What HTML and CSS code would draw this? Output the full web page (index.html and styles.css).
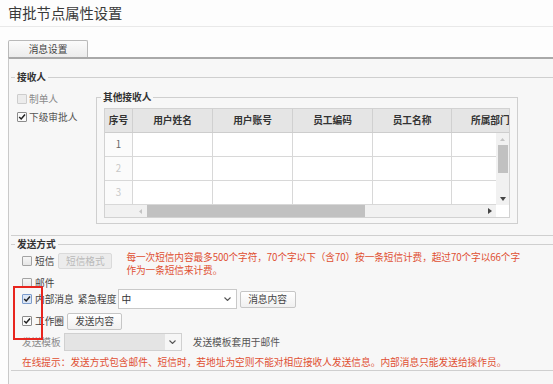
FILE: index.html
```html
<!DOCTYPE html>
<html lang="zh-CN">
<head>
    <meta charset="UTF-8">
    <title>审批节点属性设置</title>
    <link rel="stylesheet" href="styles.css">
</head>
<body>
    <div class="page-title">审批节点属性设置</div>

    <div class="tabs">
        <div class="tab">消息设置</div>
    </div>

    <div class="panel">
        <!-- 接收人 -->
        <div class="group group-recv">
            <div class="group-title">接收人</div>
            <div class="recv-body">
                <div class="recv-left">
                    <label class="check-row muted"><span class="cb dis"></span>制单人</label>
                    <label class="check-row"><span class="cb on"><svg viewBox="0 0 8 8"><path d="M1.2 4 3.2 6 7 1.4"/></svg></span>下级审批人</label>
                </div>

                <div class="box">
                    <div class="group-title box-title">其他接收人</div>
                    <div class="grid">
                        <div class="grid-head">
                            <div class="cell w-no">序号</div>
                            <div class="cell w-80">用户姓名</div>
                            <div class="cell w-80">用户账号</div>
                            <div class="cell w-80">员工编码</div>
                            <div class="cell w-79">员工名称</div>
                            <div class="cell w-last">所属部门</div>
                        </div>
                        <div class="grid-body">
                            <div class="grid-rows">
                                <div class="grid-row">
                                    <div class="cell w-no num">1</div>
                                    <div class="cell w-80"></div>
                                    <div class="cell w-80"></div>
                                    <div class="cell w-80"></div>
                                    <div class="cell w-79"></div>
                                    <div class="cell w-80"></div>
                                </div>
                                <div class="grid-row">
                                    <div class="cell w-no num light">2</div>
                                    <div class="cell w-80"></div>
                                    <div class="cell w-80"></div>
                                    <div class="cell w-80"></div>
                                    <div class="cell w-79"></div>
                                    <div class="cell w-80"></div>
                                </div>
                                <div class="grid-row">
                                    <div class="cell w-no num light">3</div>
                                    <div class="cell w-80"></div>
                                    <div class="cell w-80"></div>
                                    <div class="cell w-80"></div>
                                    <div class="cell w-79"></div>
                                    <div class="cell w-80"></div>
                                </div>
                            </div>
                            <div class="vscroll">
                                <div class="vs-btn"><svg width="5" height="3" viewBox="0 0 5 3"><polygon points="0,3 2.5,0 5,3" fill="#c4c4c4"/></svg></div>
                                <div class="vs-thumb"></div>
                                <div class="vs-track"></div>
                                <div class="vs-btn"><svg width="6" height="4" viewBox="0 0 6 4"><polygon points="0,0 6,0 3,4" fill="#444"/></svg></div>
                            </div>
                        </div>
                        <div class="hscroll">
                            <div class="hs-fix"></div>
                            <div class="hs-btn hs-left"><svg width="3" height="5" viewBox="0 0 3 5"><polygon points="3,0 0,2.5 3,5" fill="#c4c4c4"/></svg></div>
                            <div class="hs-thumb"></div>
                            <div class="hs-track"></div>
                            <div class="hs-btn"><svg width="4" height="6" viewBox="0 0 4 6"><polygon points="0,0 4,3 0,6" fill="#444"/></svg></div>
                            <div class="hs-corner"></div>
                        </div>
                    </div>
                </div>
            </div>
        </div>

        <!-- 发送方式 -->
        <div class="group group-send">
            <div class="group-title send-title">发送方式</div>

            <div class="send-row row-sms">
                <div class="opt">
                    <span class="cb"></span>
                    <span class="opt-label">短信</span>
                    <button class="btn btn-dis w-54">短信格式</button>
                </div>
                <div class="tip tip-sms">每一次短信内容最多500个字符，70个字以下（含70）按一条短信计费，超过70个字以66个字<br>作为一条短信来计费。</div>
            </div>

            <div class="send-row row-mail">
                <span class="cb"></span>
                <span class="opt-label">邮件</span>
            </div>

            <div class="send-row row-msg">
                <span class="cb on focus"><svg viewBox="0 0 8 8"><path d="M1.2 4 3.2 6 7 1.4"/></svg></span>
                <span class="opt-label">内部消息</span>
                <span class="field-label">紧急程度</span>
                <div class="select sel-level"><span>中</span><svg width="7" height="4" viewBox="0 0 7 4"><polyline points="0.5,0.5 3.5,3.5 6.5,0.5"/></svg></div>
                <button class="btn w-56">消息内容</button>
            </div>

            <div class="send-row row-circle">
                <span class="cb on"><svg viewBox="0 0 8 8"><path d="M1.2 4 3.2 6 7 1.4"/></svg></span>
                <span class="opt-label">工作圈</span>
                <button class="btn w-55">发送内容</button>
            </div>

            <div class="send-row row-tpl">
                <span class="tpl-label">发送模板</span>
                <div class="select dis sel-tpl"><span></span><svg width="7" height="4" viewBox="0 0 7 4"><polyline points="0.5,0.5 3.5,3.5 6.5,0.5"/></svg></div>
                <span class="tpl-note">发送模板套用于邮件</span>
            </div>

            <div class="send-row row-tip">
                <span class="tip">在线提示：发送方式包含邮件、短信时，若地址为空则不能对相应接收人发送信息。内部消息只能发送给操作员。</span>
            </div>
        </div>
    </div>

    <div class="mark"></div>
</body>
</html>
```

FILE: styles.css
```css
body {
    margin: 0;
    font-family: "Noto Sans CJK SC", "Microsoft YaHei", sans-serif;
    font-size: 9.7px;
    color: #333;
    background-color: #fdfdfd;
}

.page-title {
    height: 26px;
    line-height: 26px;
    padding-left: 8px;
    font-size: 14.3px;
    color: #3a3a3a;
    border-bottom: 1px solid #e9e9e9;
}

.tabs {
    padding: 13px 0 0 8px;
}

.tab {
    width: 80px;
    height: 17px;
    box-sizing: border-box;
    border: 1px solid #b9b9b9;
    border-bottom: 0;
    border-radius: 2px 2px 0 0;
    background: linear-gradient(#fbfbfb, #ececec);
    text-align: center;
    line-height: 16px;
    color: #444;
}

.panel {
    margin-left: 8px;
    height: 325px;
    border-top: 2px solid #a9a9a9;
    border-left: 1px solid #c9c9c9;
    background-color: #f7f7f7;
}

/* groups (fieldset look) */
.group {
    margin-left: 2px;
    border-top: 1px solid #cfcfcf;
    border-bottom: 1px solid #cfcfcf;
}

.group-title {
    width: max-content;
    margin: -7px 0 0 4px;
    padding: 0 2px;
    line-height: 13px;
    font-weight: bold;
    color: #333;
    background-color: #f7f7f7;
}

.group-recv {
    margin-top: 18px;
    padding-bottom: 11px;
}

.recv-body {
    display: flex;
    align-items: flex-start;
}

.recv-left {
    width: 79px;
    padding: 6px 0 0 6px;
}

.check-row {
    display: flex;
    align-items: center;
    gap: 2px;
    height: 18px;
    color: #555;
}

.check-row.muted {
    color: #8a8a8a;
}

/* checkbox */
.cb {
    flex: none;
    display: flex;
    align-items: center;
    justify-content: center;
    width: 10px;
    height: 10px;
    box-sizing: border-box;
    border: 1px solid #a3a3a3;
    border-radius: 1px;
    background: linear-gradient(#f6f6f6, #e6e6e6);
}

.cb.dis {
    border-color: #cdcdcd;
    background: #ececec;
}

.cb.on {
    background: #fafafa;
    border-color: #8c8c8c;
}

.cb.focus {
    border-color: #7c9ccc;
    background: #dce6f5;
}

.cb svg {
    width: 8px;
    height: 8px;
    fill: none;
    stroke: #222;
    stroke-width: 1.5;
}

/* inner box */
.box {
    width: 422px;
    box-sizing: border-box;
    margin-top: 13px;
    padding: 0 7px 5px;
    border: 1px solid #cfcfcf;
    background-color: #f7f7f7;
}

.box-title {
    margin-left: -3px;
}

/* grid */
.grid {
    margin-top: 4px;
    border: 1px solid #d2d2d2;
    background-color: #fff;
}

.grid-head {
    display: flex;
    height: 24px;
    box-sizing: border-box;
    overflow: hidden;
    background-color: #e5e5e5;
    border-bottom: 1px solid #cdcdcd;
}

.cell {
    flex: none;
    box-sizing: border-box;
    border-right: 1px solid #d8d8d8;
    text-align: center;
    white-space: nowrap;
}

.grid-head .cell {
    line-height: 23px;
    font-weight: bold;
    color: #333;
    border-right-color: #d0d0d0;
}

.w-no { width: 28px; }
.w-80 { width: 80px; }
.w-79 { width: 79px; }

.grid-head .w-last {
    flex: 1;
    padding-left: 19px;
    border-right: 0;
}

.grid-body {
    display: flex;
    height: 72px;
}

.grid-rows {
    flex: 1;
    min-width: 0;
    overflow: hidden;
}

.grid-row {
    display: flex;
    height: 24px;
    box-sizing: border-box;
    border-bottom: 1px solid #d8d8d8;
}

.grid-row .cell {
    height: 23px;
    line-height: 23px;
}

.num {
    color: #666;
    background-color: #fbfbfb;
}

.num.light {
    color: #c8c8c8;
}

.vscroll {
    flex: none;
    width: 13px;
    display: flex;
    flex-direction: column;
    align-items: center;
    background-color: #f1f1f1;
}

.vs-btn {
    height: 12px;
    display: flex;
    align-items: center;
    justify-content: center;
}

.vs-thumb {
    width: 10px;
    height: 28px;
    background-color: #c1c1c1;
}

.vs-track {
    flex: 1;
}

.hscroll {
    display: flex;
    height: 12px;
    background-color: #f1f1f1;
}

.hs-fix {
    width: 28px;
}

.hs-btn {
    width: 12px;
    display: flex;
    align-items: center;
    justify-content: center;
}

.hs-left {
    width: 14px;
}

.hs-thumb {
    width: 218px;
    background-color: #c1c1c1;
}

.hs-track {
    flex: 1;
}

.hs-corner {
    width: 13px;
    background-color: #fff;
}

/* 发送方式 */
.group-send {
    margin-top: 8px;
    padding-left: 11px;
    padding-bottom: 1px;
}

.send-title {
    margin-left: -7px;
}

.send-row {
    display: flex;
    align-items: center;
}

.opt {
    display: flex;
    align-items: center;
    height: 16px;
    margin-top: 2px;
}

.opt-label {
    margin-left: 3px;
    color: #444;
}

.row-sms {
    align-items: flex-start;
    height: 26px;
}

.row-mail {
    height: 12px;
}

.row-msg {
    height: 20px;
}

.row-circle {
    height: 18px;
    margin-top: 3px;
}

.row-tpl {
    height: 18px;
    margin-top: 3px;
}

.row-tip {
    height: 13px;
    margin-top: 5px;
}

.tip {
    line-height: 13px;
    color: #e04f32;
    white-space: nowrap;
}

.tip-sms {
    margin-left: 14px;
    letter-spacing: -0.1px;
}

.btn {
    height: 16px;
    padding: 0;
    font-family: inherit;
    font-size: inherit;
    color: #444;
    border: 1px solid #c6c6c6;
    border-radius: 2px;
    background: linear-gradient(#ffffff, #f0f0f0);
}

.btn-dis {
    color: #b9b9b9;
    border-color: #dadada;
    background: #ececec;
}

.row-sms .btn { margin-left: 4px; }
.row-msg .btn { margin-left: 3px; height: 17px; }
.row-circle .btn { margin-left: 3px; height: 17px; }

.w-54 { width: 54px; }
.w-55 { width: 55px; }
.w-56 { width: 56px; }

.field-label {
    margin-left: 4px;
    color: #444;
}

.select {
    display: flex;
    align-items: center;
    justify-content: space-between;
    box-sizing: border-box;
    padding: 0 5px 0 3px;
    border: 1px solid #c9c9c9;
    background-color: #fff;
    color: #333;
}

.select svg {
    fill: none;
    stroke: #555;
    stroke-width: 1.1;
}

.sel-level {
    width: 119px;
    height: 20px;
    margin-left: 1px;
}

.select.dis {
    border-color: #d0d0d0;
    background: linear-gradient(to right, #e4e4e4 calc(100% - 16px), #f6f6f6 0);
}

.sel-tpl {
    width: 118px;
    height: 18px;
    margin-left: 3px;
}

.tpl-label {
    color: #8a8a8a;
}

.tpl-note {
    margin-left: 11px;
    color: #555;
}

/* red annotation box */
.mark {
    position: absolute;
    left: 13px;
    top: 286px;
    width: 30px;
    height: 54px;
    box-sizing: border-box;
    border: 2px solid #e8251e;
}
```
